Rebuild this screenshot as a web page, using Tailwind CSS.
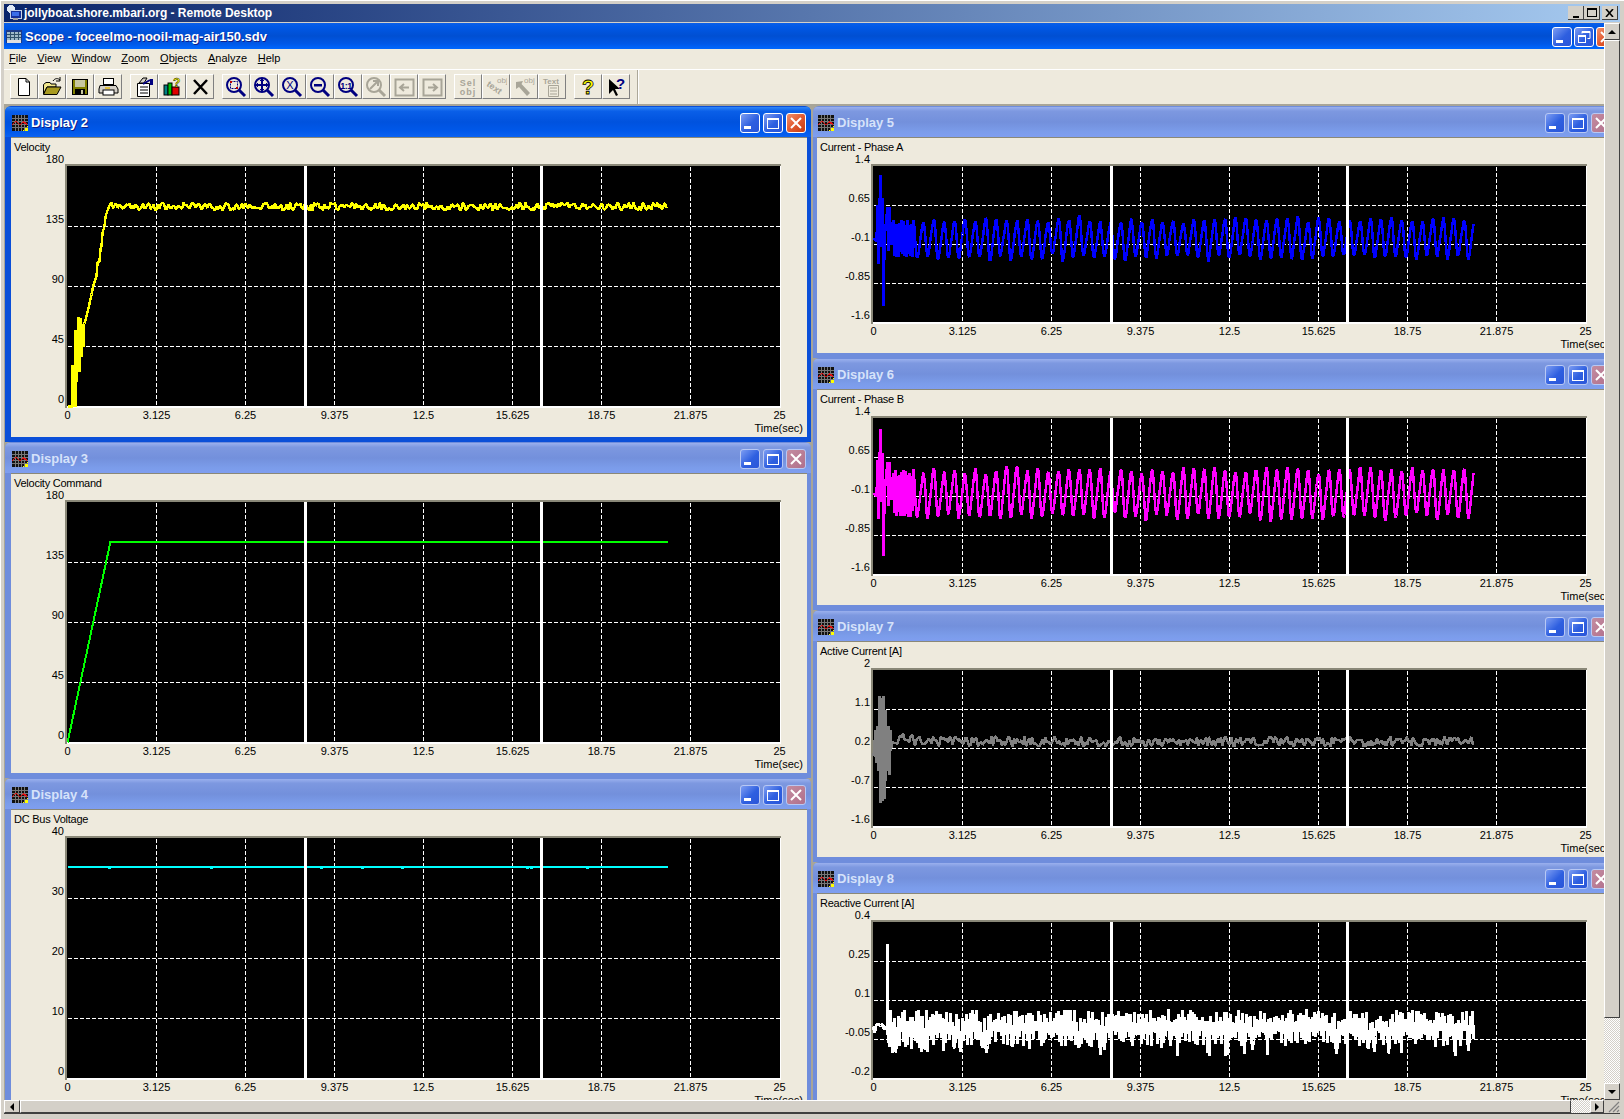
<!DOCTYPE html>
<html lang="en">
<head>
  <meta charset="UTF-8" />
  <title>Scope - foceelmo-nooil-mag-air150.sdv</title>
  <script src="https://cdn.jsdelivr.net/npm/@tailwindcss/browser@4"></script>
</head>
<body class="w-[1624px] h-[1119px] overflow-hidden bg-[#d4d0c8] text-black text-[11px] [font-family:'Liberation_Sans',sans-serif]">

  <div class="h-full flex flex-col pt-[4px] px-[4px] shadow-[inset_1px_1px_0_#ffffff]">

    <!-- remote desktop title bar -->
    <div class="h-[18px] shrink-0 flex items-center bg-[linear-gradient(to_right,#0a246a,#a6caf0)]">
      <svg class="ml-[2px] w-[16px] h-[16px]" viewBox="0 0 16 16" shape-rendering="crispEdges">
        <circle cx="5" cy="4" r="4" fill="#dfe8f5"/>
        <rect x="4" y="5" width="11" height="8" fill="#14309a" stroke="#c8d4e8"/>
        <rect x="6" y="7" width="7" height="4" fill="#3a6ee8"/>
        <rect x="7" y="13" width="5" height="2" fill="#a0a0a0"/>
      </svg>
      <span class="ml-[2px] text-white font-bold text-[12px] tracking-[-0.03px]">jollyboat.shore.mbari.org - Remote Desktop</span>
      <div class="ml-auto mr-[2px] flex">
        <div class="w-[16px] h-[14px] bg-[#d4d0c8] border-r border-b border-[#404040] flex items-end justify-center pb-[1px]"><div class="w-[6px] h-[2px] bg-black"></div></div>
        <div class="w-[16px] h-[14px] bg-[#d4d0c8] border-r border-b border-[#404040] flex items-center justify-center"><div class="w-[10px] h-[9px] border border-t-2 border-black"></div></div>
        <div class="ml-[2px] w-[16px] h-[14px] bg-[#d4d0c8] border-r border-b border-[#404040] flex items-center justify-center">
          <svg class="w-[9px] h-[8px]" viewBox="0 0 9 8"><path d="M1 0 L8 8 M8 0 L1 8" stroke="#000" stroke-width="1.6"/></svg>
        </div>
      </div>
    </div>
    <div class="h-[1px] shrink-0 bg-[#d4d0c8]"></div>

    <div class="h-[1077px] shrink-0 flex">
      <!-- scope application, clipped by the remote session -->
      <div class="w-[1600px] shrink-0 overflow-hidden bg-[#eeeadd] flex flex-col">
        <div class="h-[26px] shrink-0 pt-[2px] flex items-center bg-[linear-gradient(to_bottom,#0a5fe8_0%,#0058e6_15%,#004fd2_50%,#0058e8_80%,#0068ff_100%)]">
          <svg class="ml-[2px] w-[16px] h-[16px]" viewBox="0 0 16 16" shape-rendering="crispEdges">
            <rect x="0" y="1" width="16" height="13" fill="#1c3a88"/>
            <rect x="1" y="3" width="14" height="9" fill="#9fb8c8"/>
            <path d="M1 5h14M1 8h14M4 3v9M8 3v9M12 3v9" stroke="#30506a"/>
            <rect x="1" y="11" width="14" height="3" fill="#e0e0e0"/>
          </svg>
          <span class="ml-[3px] text-white font-bold text-[13px] [text-shadow:1px_1px_#0f1f89]">Scope - foceelmo-nooil-mag-air150.sdv</span>
          <div class="ml-auto flex gap-[2px] w-[52px] shrink-0" id="appButtons"></div>
        </div>

        <div class="h-[20px] shrink-0 pl-[5px] pb-[2px] flex items-center gap-[10.6px]">
          <span><u>F</u>ile</span>
          <span><u>V</u>iew</span>
          <span><u>W</u>indow</span>
          <span><u>Z</u>oom</span>
          <span><u>O</u>bjects</span>
          <span><u>A</u>nalyze</span>
          <span><u>H</u>elp</span>
        </div>
        <div class="h-[1px] shrink-0 bg-white"></div>

        <div class="h-[34px] shrink-0 pl-[6px] pt-[4px] flex" id="toolbar"></div>

        <div class="h-[996px] shrink-0 overflow-hidden flex gap-[2px] pl-[1px] pt-[2px] bg-[#a8a598]">
          <div class="w-[806px] shrink-0 flex flex-col" id="leftColumn"></div>
          <div class="w-[803px] shrink-0 flex flex-col" id="rightColumn"></div>
        </div>
      </div>

      <!-- vertical scrollbar -->
      <div class="w-[16px] shrink-0 flex flex-col">
        <div class="h-[17px] shrink-0 bg-[#d4d0c8] border border-t-white border-l-white border-r-[#404040] border-b-[#404040] flex items-center justify-center">
          <div class="w-0 h-0 border-x-[4px] border-x-transparent border-b-[4px] border-b-black"></div>
        </div>
        <div class="h-[978px] shrink-0 bg-[#d4d0c8] border border-t-white border-l-white border-r-[#404040] border-b-[#404040]"></div>
        <div class="flex-1 bg-[repeating-conic-gradient(#ffffff_0_25%,#d4d0c8_0_50%)] bg-[length:2px_2px]"></div>
        <div class="h-[17px] shrink-0 bg-[#d4d0c8] border border-t-white border-l-white border-r-[#404040] border-b-[#404040] flex items-center justify-center">
          <div class="w-0 h-0 border-x-[4px] border-x-transparent border-t-[4px] border-t-black"></div>
        </div>
      </div>
    </div>

    <!-- horizontal scrollbar -->
    <div class="h-[14px] shrink-0 flex border-b border-[#404040]">
      <div class="w-[16px] shrink-0 bg-[#d4d0c8] border border-t-white border-l-white border-r-[#404040] border-b-[#404040] flex items-center justify-center">
        <div class="w-0 h-0 border-y-[4px] border-y-transparent border-r-[4px] border-r-black"></div>
      </div>
      <div class="w-[1551px] shrink-0 bg-[#d4d0c8] border border-t-white border-l-white border-r-[#404040] border-b-[#404040]"></div>
      <div class="w-[19px] shrink-0 bg-[repeating-conic-gradient(#ffffff_0_25%,#d4d0c8_0_50%)] bg-[length:2px_2px]"></div>
      <div class="w-[14px] shrink-0 bg-[#d4d0c8] border border-t-white border-l-white border-r-[#404040] border-b-[#404040] flex items-center justify-center">
        <div class="w-0 h-0 border-y-[4px] border-y-transparent border-l-[4px] border-l-black"></div>
      </div>
      <div class="w-[16px] shrink-0 flex items-end justify-end">
        <svg class="w-[13px] h-[13px]" viewBox="0 0 13 13"><path d="M12 2 L2 12 M12 6 L6 12 M12 10 L10 12" stroke="#808080" stroke-width="1.2"/></svg>
      </div>
    </div>
  </div>

  <script>
    // seeded so the traces stay the same from run to run
    let seed = 4217;
    function rnd() {
      seed = (seed * 16807) % 2147483647;
      return (seed - 1) / 2147483646;
    }

    const END = 600;

    function velocityTrace() {
      const pts = [[0,240],[5,240],[5,199],[6,240],[7,199],[8,240],[8,164],[9,215],[10,164],[11,200],[11,151],[12,205],[13,152],[14,190],[15,158],[16,180],[16,160],
        [17,157],[19,150],[22,137],[24,128],[26,118],[29,110],[30,96],[32,95],[33,82],[34,80],[35,66],[37,60],[38,50],[40,44],[42,39]];
      for (let x = 44; x <= END; x += 1.5) {
        pts.push([x, 40 + (rnd() - 0.5) * 8]);
      }
      return pts;
    }

    function commandTrace() {
      return [[0,240],[43,39],[END,39]];
    }

    function busTrace() {
      const pts = [[0,28]];
      [42,144,254,295,335,460,464,520].forEach(x => pts.push([x-1,28],[x,30],[x+1,28]));
      pts.push([END,28]);
      return pts;
    }

    // phase current: start up transient, a fast burst, then the steady sine
    function phaseTrace(mid, amp, top, dip) {
      const pts = [[0,mid],[3,mid+3],[4,mid-33],[5,mid+25],[6,mid-33],[7,top],[8,mid+8],[9,mid-40],[10,dip],[11,mid+8],[12,mid-12],[14,mid-31],[15,mid+12],[16,mid-31],[17,mid-12],[18,mid+6],[20,mid-2]];
      for (let x = 20; x < 40; x++) {
        pts.push([x, mid + (x % 2 ? 1 : -1) * amp * (0.7 + rnd() * 0.3)]);
      }
      const period = 10.4;
      let cycle = -1, scale = 1, shift = 0;
      for (let x = 40; x <= END; x++) {
        const c = Math.floor(x / period);
        if (c !== cycle) {
          cycle = c;
          scale = 0.85 + rnd() * 0.2;
          shift = (rnd() - 0.5) * 4;
        }
        const a = x * 2 * Math.PI / period;
        pts.push([x, mid + shift + amp * scale * (Math.sin(a) + 0.18 * Math.sin(2 * a)) + (rnd() - 0.5) * 2.5]);
      }
      return pts;
    }

    function activeTrace() {
      const pts = [[0,86],[2,60],[3,92],[4,56],[5,100],[6,26],[7,132],[8,28],[9,130],[10,26],[11,128],[12,40],[12,110],[13,60],[14,100],[15,56],[16,104],[17,60],[17,80],[19,72],[24,73]];
      for (let x = 25; x <= END; x += 1.5) {
        const base = x < 40 ? 67 : 71;
        pts.push([x, base + (rnd() - 0.5) * 10]);
      }
      return pts;
    }

    function reactiveTrace() {
      const pts = [[0,104]];
      for (let x = 1; x < 14; x += 2) pts.push([x, 100 + rnd() * 12]);
      pts.push([14,108],[14,21],[14,108]);
      for (let x = 16; x <= END; x += 1) {
        let y = x % 2 ? 87 + rnd() * 14 : 108 + rnd() * 16;
        if (rnd() > 0.94) y = 122 + rnd() * 13;
        pts.push([x, y]);
      }
      return pts;
    }

    const xLabels = ["0","3.125","6.25","9.375","12.5","15.625","18.75","21.875","25"];

    const leftWindows = [
      { name: "Display 2", label: "Velocity", active: true, color: "#ffff00", width: 2.5, ticks: ["180","135","90","45","0"], trace: velocityTrace() },
      { name: "Display 3", label: "Velocity Command", color: "#00ff00", width: 2, ticks: ["180","135","90","45","0"], trace: commandTrace() },
      { name: "Display 4", label: "DC Bus Voltage", color: "#00ffff", width: 2, ticks: ["40","30","20","10","0"], trace: busTrace() }
    ];
    const rightWindows = [
      { name: "Display 5", label: "Current - Phase A", color: "#0000ff", width: 2.5, ticks: ["1.4","0.65","-0.1","-0.85","-1.6"], trace: phaseTrace(72, 19, 9, 139) },
      { name: "Display 6", label: "Current - Phase B", color: "#ff00ff", width: 2.5, ticks: ["1.4","0.65","-0.1","-0.85","-1.6"], trace: phaseTrace(75, 24, 11, 137) },
      { name: "Display 7", label: "Active Current [A]", color: "#808080", width: 2.5, ticks: ["2","1.1","0.2","-0.7","-1.6"], trace: activeTrace() },
      { name: "Display 8", label: "Reactive Current [A]", color: "#ffffff", width: 3, ticks: ["0.4","0.25","0.1","-0.05","-0.2"], trace: reactiveTrace() }
    ];

    function chart(w, plotH, clientH) {
      const x0 = 56.5, y0 = 28.5, bottom = y0 + plotH;
      let grid = "", ticks = "", labels = "";
      for (let i = 1; i < 8; i++) {
        grid += `<line x1="${x0 + 89 * i}" y1="${y0}" x2="${x0 + 89 * i}" y2="${bottom}" stroke="#fff" stroke-dasharray="4 2"/>`;
      }
      for (let i = 1; i < 4; i++) {
        const y = y0 + plotH / 4 * i;
        grid += `<line x1="${x0}" y1="${y}" x2="${x0 + 712}" y2="${y}" stroke="#fff" stroke-dasharray="4 2"/>`;
      }
      w.ticks.forEach((t, i) => {
        const y = y0 + plotH / 4 * i - 4;
        ticks += `<text x="53" y="${y}" text-anchor="end">${t}</text>`;
      });
      xLabels.forEach((t, i) => {
        labels += `<text x="${x0 + 89 * i}" y="${bottom + 12}" text-anchor="middle">${t}</text>`;
      });
      const points = w.trace.map(p => (x0 + p[0]).toFixed(1) + "," + (y0 + p[1]).toFixed(1)).join(" ");
      return `
        <svg class="block w-[796px] fill-black text-[11px]" height="${clientH}" viewBox="0 0 796 ${clientH}">
          <text x="3" y="13" letter-spacing="-0.25">${w.label}</text>
          ${ticks}
          <rect x="54" y="26" width="716" height="${plotH + 4}" fill="#8a8878" shape-rendering="crispEdges"/>
          <rect x="56" y="28" width="714" height="${plotH + 2}" fill="#fff" shape-rendering="crispEdges"/>
          <rect x="56" y="28" width="713" height="${plotH}" fill="#000" shape-rendering="crispEdges"/>
          <g shape-rendering="crispEdges">${grid}</g>
          <polyline points="${points}" fill="none" stroke="${w.color}" stroke-width="${w.width}" stroke-linejoin="bevel" shape-rendering="crispEdges"/>
          <rect x="${x0 + 236}" y="28" width="3" height="${plotH}" fill="#fff" shape-rendering="crispEdges"/>
          <rect x="${x0 + 472}" y="28" width="3" height="${plotH}" fill="#fff" shape-rendering="crispEdges"/>
          ${labels}
          <text x="792" y="${bottom + 25}" text-anchor="end">Time(sec)</text>
        </svg>`;
    }

    const gridIcon = `
      <svg class="w-[16px] h-[16px] shrink-0" viewBox="0 0 16 16" shape-rendering="crispEdges">
        <rect width="16" height="16" fill="#111"/>
        <path d="M10 16 L16 10 V16 Z" fill="#ffff00"/>
        <path d="M3 0v16M6 0v16M9 0v16M12 0v16M0 3h16M0 6h16M0 9h16M0 12h16" stroke="#777"/>
        <path d="M0 10 L4 6 L8 10 L11 7 L15 9" fill="none" stroke="#e01010" stroke-width="1.4"/>
      </svg>`;

    function winButton(kind, active) {
      const isClose = kind === "close";
      const face = isClose
        ? (active ? "bg-[linear-gradient(135deg,#f0906c,#e25a30_50%,#c53c12)]" : "bg-[linear-gradient(135deg,#c48ca0,#b0708c)]")
        : "bg-[linear-gradient(135deg,#7d9df2,#2e5fe0_55%,#2a55d8)]";
      const edge = active ? "border-white" : "border-[#b8c8f4]";
      const glyphs = {
        min: `<rect x="3" y="12" width="7" height="3" fill="#fff"/>`,
        max: `<rect x="3.5" y="4.5" width="11" height="10" fill="none" stroke="#fff"/><rect x="3" y="4" width="12" height="2" fill="#fff"/>`,
        restore: `<rect x="3.5" y="7.5" width="7" height="7" fill="none" stroke="#fff"/><rect x="3" y="7" width="8" height="2" fill="#fff"/><path d="M7 5.5V3.5H15V10.5H12.5" fill="none" stroke="#fff"/><rect x="7" y="3" width="8" height="2" fill="#fff"/>`,
        close: `<path d="M4 4 L14 14 M14 4 L4 14" stroke="#fff" stroke-width="2"/>`
      };
      return `<div class="w-[20px] h-[20px] shrink-0 rounded-[3px] border ${edge} ${face}">
        <svg class="w-[18px] h-[18px]" viewBox="0 0 18 18" shape-rendering="geometricPrecision">${glyphs[kind]}</svg>
      </div>`;
    }

    function createWindow(w, outerH, clientH, plotH, frame) {
      const bar = w.active
        ? "bg-[linear-gradient(to_bottom,#2f86f8_0%,#0a5fe8_14%,#0052de_50%,#0058ea_80%,#0a62f2_100%)]"
        : "bg-[linear-gradient(to_bottom,#9ab0ee_0%,#7d98e0_14%,#7390dc_50%,#7b9cea_82%,#7f9ef0_100%)]";
      const border = w.active ? "bg-[#0a4fd8]" : "bg-[#6f8ddc]";
      const text = w.active ? "text-white [text-shadow:1px_1px_#0f1f89]" : "text-[#d6e2fa]";
      return `
        <div class="shrink-0 overflow-hidden rounded-t-[6px] pt-[1px] ${border} ${frame} pr-[4px]" style="height:${outerH}px">
          <div class="h-[30px] -mx-[6px] pl-[7px] pr-[7px] pt-[2px] flex items-center ${bar}">
            ${gridIcon}
            <span class="ml-[3px] font-bold text-[13px] ${text}">${w.name}</span>
            <div class="ml-auto flex gap-[3px]">${winButton("min", w.active)}${winButton("max", w.active)}${winButton("close", w.active)}</div>
          </div>
          <div class="bg-[#eeeadd] border-t border-[#8a8878] w-[796px]">
            ${chart(w, plotH, clientH - 1)}
          </div>
        </div>`;
    }

    document.getElementById("appButtons").innerHTML = winButton("min", true) + winButton("restore", true) + winButton("close", true);
    document.getElementById("leftColumn").innerHTML = leftWindows.map(w => createWindow(w, 336, 300, 240, "pl-[6px]")).join("");
    document.getElementById("rightColumn").innerHTML = rightWindows.map(w => createWindow(w, 252, 216, 156, "pl-[4px]")).join("");

    // toolbar icons
    const lens = (inner, stroke = "#000080", handle = "#000080") => `
      <circle cx="9" cy="9" r="7" fill="none" stroke="${stroke}" stroke-width="2"/>
      <path d="M14 14 L20 20" stroke="${handle}" stroke-width="3"/>${inner}`;
    const grey = "#a8a598";
    const icons = {
      newDoc: `<path d="M5.5 2.5H13L16.5 6V19.5H5.5Z" fill="#fff" stroke="#000"/><path d="M13 2.5V6H16.5" fill="none" stroke="#000"/>`,
      open: `<path d="M2.5 8.5L5 6.5H9L10 8H15V11H6L2.5 18Z" fill="#f0e68c" stroke="#000"/><path d="M2.5 18.5L6 11H20L16 18.5Z" fill="#a89a20" stroke="#000"/><path d="M12 5C14 2 17 2 19 4M19 1V5H15" fill="none" stroke="#000"/>`,
      save: `<rect x="3.5" y="3.5" width="15" height="15" fill="#808000" stroke="#000"/><rect x="6" y="4" width="10" height="7" fill="#c8c8a0"/><rect x="6" y="13" width="10" height="6" fill="#000"/><rect x="12" y="14" width="2" height="4" fill="#c8c8a0"/>`,
      print: `<rect x="6.5" y="2.5" width="10" height="6" fill="#fff" stroke="#000"/><path d="M3 9.5H19L21 13V17H2V13Z" fill="#d4d0c8" stroke="#000"/><rect x="6" y="14" width="11" height="5" fill="#fff" stroke="#000"/><rect x="8" y="11" width="5" height="2" fill="#e0c040"/>`,
      props: `<path d="M4.5 7.5H16.5V20.5H4.5Z" fill="#fff" stroke="#000"/><path d="M7 11h8M7 14h8M7 17h8" stroke="#000"/><path d="M6 7L10 2H14L11 7Z" fill="#d4d0c8" stroke="#000"/><rect x="17" y="3" width="3" height="6" fill="#000080"/><path d="M10 8L17 4" stroke="#000080" stroke-width="2"/>`,
      books: `<rect x="3" y="9" width="4" height="10" fill="#008080" stroke="#000"/><rect x="7" y="7" width="4" height="12" fill="#00c000" stroke="#000"/><rect x="11" y="11" width="7" height="8" fill="#e00000" stroke="#000"/><text x="12" y="11" font-size="12" font-weight="700" fill="#ffff00" stroke="#000" stroke-width="0.4">?</text>`,
      cross: `<path d="M5 4L18 18M18 4L5 18" stroke="#000" stroke-width="2.5"/>`,
      zoomBox: lens(`<rect x="5.5" y="5.5" width="7" height="7" fill="none" stroke="#000080" stroke-dasharray="2 1"/><rect x="5" y="5" width="2" height="2" fill="#c00000"/><rect x="11" y="11" width="2" height="2" fill="#c00000"/>`),
      zoomFit: lens(`<path d="M9 3V15M3 9H15" stroke="#000080" stroke-width="2"/><path d="M7 5L9 3L11 5M7 13L9 15L11 13M5 7L3 9L5 11M13 7L15 9L13 11" fill="none" stroke="#000080"/>`),
      zoomX: lens(`<text x="9" y="13" text-anchor="middle" font-size="11" fill="#000080">X</text>`),
      zoomOut: lens(`<rect x="5" y="8" width="8" height="2.5" fill="#000080"/>`),
      zoomOne: lens(`<text x="9" y="12.5" text-anchor="middle" font-size="9" font-weight="700" letter-spacing="-0.5" fill="#000080">1:1</text>`),
      zoomOff: lens(`<path d="M5 13L13 5M8 5H13V10" fill="none" stroke="${grey}" stroke-width="2"/>`, grey, grey),
      backOff: `<rect x="2.5" y="3.5" width="18" height="16" fill="none" stroke="${grey}" stroke-width="2"/><path d="M16 11.5H8M11 8L7 11.5L11 15" fill="none" stroke="${grey}" stroke-width="2"/>`,
      forwardOff: `<rect x="2.5" y="3.5" width="18" height="16" fill="none" stroke="${grey}" stroke-width="2"/><path d="M7 11.5H15M12 8L16 11.5L12 15" fill="none" stroke="${grey}" stroke-width="2"/>`,
      sel: `<text x="11" y="10" text-anchor="middle" font-size="9" font-weight="700" letter-spacing="1" fill="${grey}">Sel</text><text x="11" y="19" text-anchor="middle" font-size="9" font-weight="700" letter-spacing="1" fill="${grey}">obj</text>`,
      textObj: `<text x="1" y="14" font-size="9" font-weight="700" fill="${grey}" transform="rotate(35 8 12)">text</text><text x="12" y="7" font-size="8" fill="${grey}">obj</text>`,
      arrowObj: `<path d="M3 6L10 5L8.5 8L17 17L14 20L6 11L3 13Z" fill="${grey}"/><text x="11" y="7" font-size="8" fill="${grey}">obj</text>`,
      textDoc: `<text x="2" y="8" font-size="8" font-weight="700" fill="${grey}">Text</text><path d="M7.5 9.5H17.5V20.5H7.5Z" fill="none" stroke="${grey}"/><path d="M9 12h7M9 15h7M9 18h7" stroke="${grey}"/>`,
      help: `<text x="11" y="18" text-anchor="middle" font-size="20" font-weight="700" fill="#ffff00" stroke="#000" stroke-width="0.8">?</text>`,
      pointerHelp: `<path d="M4 3V18L8 14L11 20L13 19L10 13H15Z" fill="#000"/><text x="11" y="13" font-size="15" font-weight="700" fill="#000080">?</text>`
    };
    const groups = [
      ["newDoc","open","save","print"],
      ["props","books","cross"],
      ["zoomBox","zoomFit","zoomX","zoomOut","zoomOne","zoomOff","backOff","forwardOff"],
      ["sel","textObj","arrowObj","textDoc"],
      ["help","pointerHelp"]
    ];
    document.getElementById("toolbar").innerHTML = groups.map(g => `
      <div class="flex mr-[8px]">
        ${g.map(n => `<div class="w-[28px] h-[25px] flex items-center justify-center bg-[#eeeadd] border border-t-white border-l-white border-r-[#808080] border-b-[#808080]">
          <svg class="w-[22px] h-[22px]" viewBox="0 0 22 22">${icons[n]}</svg>
        </div>`).join("")}
      </div>`).join("") + `<div class="-mt-[4px] -ml-[1px] h-[34px] w-[2px] border-l border-[#aca899] bg-white"></div>`;
  </script>
</body>
</html>
